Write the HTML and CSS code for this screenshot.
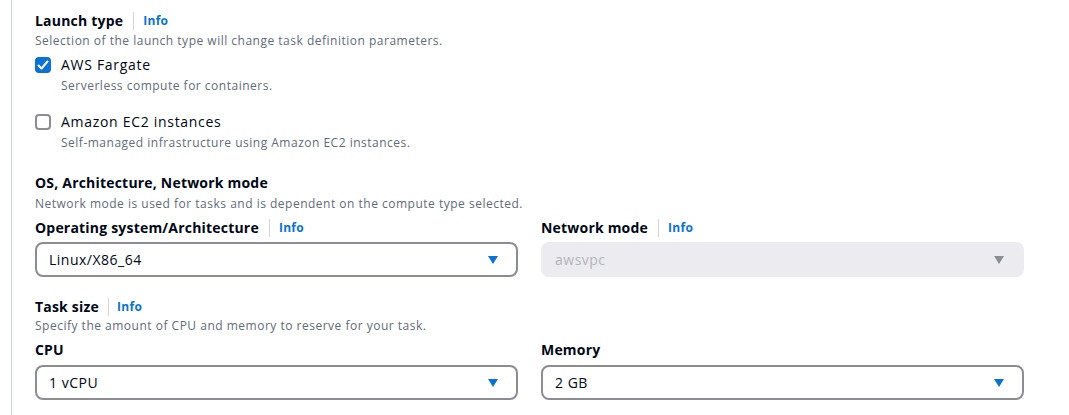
FILE: index.html
```html
<!DOCTYPE html>
<html>
<head>
<meta charset="utf-8">
<link rel="stylesheet" href="styles.css">
</head>
<body>
<div class="panel">
  <section class="group">
    <div class="label-row heading"><span>Launch type</span><span class="sep"></span><a class="info">Info</a></div>
    <div class="desc">Selection of the launch type will change task definition parameters.</div>
    <div class="options">
      <div class="option">
        <span class="box checked"><svg viewBox="0 0 16 16" width="16" height="16"><path d="M3.5 8.5 L6.5 11.5 L12.5 4.5" fill="none" stroke="#fff" stroke-width="2" stroke-linecap="round" stroke-linejoin="round"/></svg></span>
        <div class="option-text">
          <div class="option-label">AWS Fargate</div>
          <div class="desc">Serverless compute for containers.</div>
        </div>
      </div>
      <div class="option">
        <span class="box"></span>
        <div class="option-text">
          <div class="option-label">Amazon EC2 instances</div>
          <div class="desc">Self-managed infrastructure using Amazon EC2 instances.</div>
        </div>
      </div>
    </div>
  </section>

  <section class="group g2">
    <div class="heading">OS, Architecture, Network mode</div>
    <div class="desc">Network mode is used for tasks and is dependent on the compute type selected.</div>
    <div class="fields">
      <div class="field">
        <div class="label-row"><span>Operating system/Architecture</span><span class="sep"></span><a class="info">Info</a></div>
        <div class="select"><span>Linux/X86_64</span><span class="caret"></span></div>
      </div>
      <div class="field">
        <div class="label-row"><span>Network mode</span><span class="sep"></span><a class="info">Info</a></div>
        <div class="select disabled"><span>awsvpc</span><span class="caret"></span></div>
      </div>
    </div>
  </section>

  <section class="group g3">
    <div class="label-row heading"><span>Task size</span><span class="sep"></span><a class="info">Info</a></div>
    <div class="desc">Specify the amount of CPU and memory to reserve for your task.</div>
    <div class="fields">
      <div class="field">
        <div class="label-row"><span>CPU</span></div>
        <div class="select"><span>1 vCPU</span><span class="caret"></span></div>
      </div>
      <div class="field">
        <div class="label-row"><span>Memory</span></div>
        <div class="select"><span>2 GB</span><span class="caret"></span></div>
      </div>
    </div>
  </section>
</div>
</body>
</html>
```

FILE: styles.css
```css
* { box-sizing: border-box; }
html, body { margin: 0; padding: 0; background: #fff; }
body {
  font-family: "Open Sans", "Noto Sans", sans-serif;
  color: #000716;
  width: 1069px;
  height: 415px;
  overflow: hidden;
}
.panel {
  margin-left: 11px;
  border-left: 1px solid #d1d5db;
  padding: 11px 45px 20px 23px;
  height: 415px;
}
.heading, .label-row {
  font-size: 14px;
  font-weight: 700;
  line-height: 20px;
  letter-spacing: 0.2px;
}
.label-row {
  display: flex;
  align-items: center;
}
.sep {
  width: 1px;
  height: 18px;
  background: #d1d5db;
  margin: 0 9px 0 10px;
}
.g3 .heading .sep { margin: 0 8px 0 9px; }
.info {
  color: #0972d3;
  font-size: 12px;
  font-weight: 700;
  letter-spacing: 0.3px;
}
.desc {
  font-size: 12px;
  line-height: 16px;
  color: #5f6b7a;
  margin-top: 2px;
  letter-spacing: 0.5px;
}
.options {
  margin-top: 6px;
  display: flex;
  flex-direction: column;
  gap: 18px;
}
.option {
  display: flex;
  gap: 10px;
  align-items: flex-start;
}
.box {
  width: 16px;
  height: 16px;
  margin-top: 2px;
  border: 2px solid #8c8c94;
  border-radius: 4px;
  flex: none;
  display: flex;
}
.box.checked {
  background: #0972d3;
  border-color: #0972d3;
}
.box.checked svg { margin: -2px; }
.option-label {
  font-size: 14px;
  line-height: 20px;
  letter-spacing: 0.7px;
}
.option-text .desc { margin-top: 3px; }
.g2 { margin-top: 22px; }
.g2 > .desc { margin-top: 3px; }
.g3 { margin-top: 20px; }
.g3 > .desc { margin-top: 1px; }
.fields {
  display: grid;
  grid-template-columns: 1fr 1fr;
  gap: 23px;
  margin-top: 6px;
}
.field .label-row { margin-bottom: 4px; }
.g3 .field .label-row { margin-bottom: 5px; }
.select {
  height: 35px;
  border: 2px solid #8c8c94;
  border-radius: 8px;
  padding: 0 18px 0 12px;
  display: flex;
  align-items: center;
  justify-content: space-between;
  font-size: 14px;
  letter-spacing: 0.5px;
}
.caret {
  width: 0;
  height: 0;
  border-left: 5.5px solid transparent;
  border-right: 5.5px solid transparent;
  border-top: 8px solid #0972d3;
}
.select.disabled {
  background: #ebebf0;
  border-color: #ebebf0;
  color: #b4b4bb;
}
.select.disabled .caret { border-top-color: #8c8c94; }
```
